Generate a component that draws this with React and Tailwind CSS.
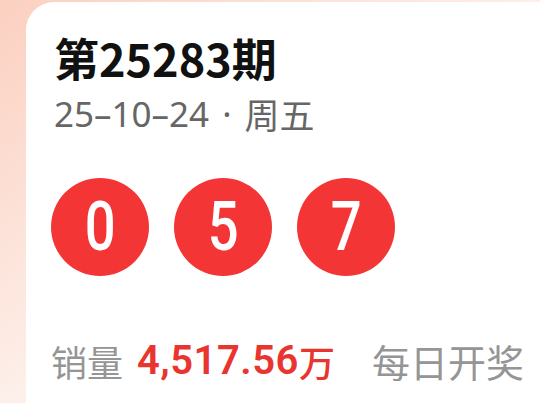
export default function App() {
  const balls = ["0", "5", "7"];
  return (
    <div className="w-[540px] h-[403px] overflow-hidden bg-gradient-to-br from-[#fbd0c0] via-[#fdefe9] to-[#fbf8f8]">
      <div
        className="ml-[26px] mt-[2px] h-[401px] rounded-tl-[28px] bg-white pl-[28px] pt-[30px]"
        style={{ fontFamily: '"Noto Sans CJK SC", Roboto, sans-serif' }}
      >
        <h1 className="text-[45px] leading-[52px] font-bold text-[#111]">第25283期</h1>
        <p
          className="mt-[10px] flex items-center text-[35px] leading-[40px] text-[#666]"
          style={{ fontFamily: '"Noto Sans", "Noto Sans CJK SC", sans-serif' }}
        >
          <span>25–10–24</span>
          <span className="mx-[13px]">·</span>
          <span style={{ fontFamily: '"Noto Sans CJK SC", sans-serif' }}>周五</span>
        </p>

        <div className="mt-[44px] flex gap-[25px] -ml-[3px]">
          {balls.map((b, i) => (
            <div
              key={i}
              className="w-[98px] h-[98px] rounded-full bg-[#f33535] flex items-center justify-center"
            >
              <span
                className="inline-block text-white text-[68px] leading-none font-medium scale-x-[0.8]"
                style={{ fontFamily: "Roboto, sans-serif" }}
              >
                {b}
              </span>
            </div>
          ))}
        </div>

        <div className="mt-[61px] flex items-center leading-[48px] -ml-[3px]">
          <span className="text-[36px] text-[#959595]">销量</span>
          <span className="ml-[14px] text-[#e8352f] flex items-center">
            <span
              className="text-[40px] font-semibold tracking-[0.5px]"
              style={{ fontFamily: "Roboto, sans-serif" }}
            >
              4,517.56
            </span>
            <span className="text-[36px] font-medium">万</span>
          </span>
          <span className="ml-[37px] text-[38px] text-[#959595]">每日开奖</span>
        </div>
      </div>
    </div>
  );
}
